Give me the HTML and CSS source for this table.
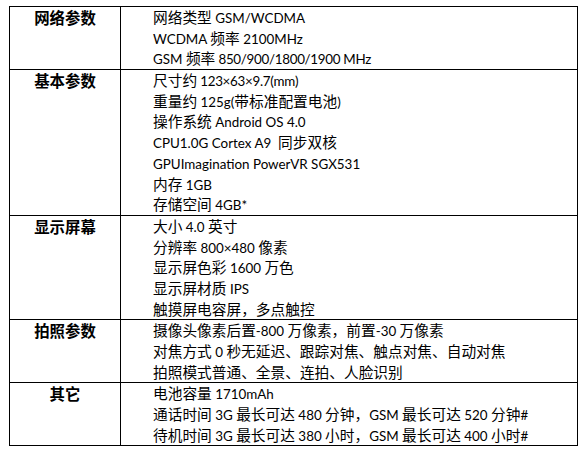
FILE: index.html
```html
<!DOCTYPE html>
<html lang="zh">
<head>
<meta charset="utf-8">
<link rel="stylesheet" href="styles.css">
</head>
<body>
<table class="spec">
  <tr>
    <th>网络参数</th>
    <td>
      <div>网络类型<span class="l"> GSM/WCDMA</span></div>
      <div><span class="l">WCDMA </span>频率<span class="l"> 2100MHz</span></div>
      <div><span class="l">GSM </span>频率<span class="l n"> 850/900/1800/1900 MHz</span></div>
    </td>
  </tr>
  <tr>
    <th>基本参数</th>
    <td>
      <div>尺寸约<span class="l n"> 123×63×9.7(mm)</span></div>
      <div>重量约<span class="l"> 125g(</span>带标准配置电池<span class="l">)</span></div>
      <div>操作系统<span class="l"> Android OS 4.0</span></div>
      <div><span class="l">CPU1.0G Cortex A9 &nbsp;</span>同步双核</div>
      <div><span class="l">GPUImagination PowerVR SGX531</span></div>
      <div>内存<span class="l"> 1GB</span></div>
      <div>存储空间<span class="l"> 4GB*</span></div>
    </td>
  </tr>
  <tr>
    <th>显示屏幕</th>
    <td>
      <div>大小<span class="l"> 4.0 </span>英寸</div>
      <div>分辨率<span class="l"> 800×480 </span>像素</div>
      <div>显示屏色彩<span class="l"> 1600 </span>万色</div>
      <div>显示屏材质<span class="l"> IPS</span></div>
      <div>触摸屏电容屏，多点触控</div>
    </td>
  </tr>
  <tr>
    <th>拍照参数</th>
    <td>
      <div>摄像头像素后置<span class="l">-800 </span>万像素，前置<span class="l">-30 </span>万像素</div>
      <div>对焦方式<span class="l"> 0 </span>秒无延迟、跟踪对焦、触点对焦、自动对焦</div>
      <div>拍照模式普通、全景、连拍、人脸识别</div>
    </td>
  </tr>
  <tr>
    <th>其它</th>
    <td>
      <div>电池容量<span class="l"> 1710mAh</span></div>
      <div>通话时间<span class="l"> 3G </span>最长可达<span class="l"> 480 </span>分钟，<span class="l">GSM </span>最长可达<span class="l"> 520 </span>分钟<span class="l">#</span></div>
      <div>待机时间<span class="l"> 3G </span>最长可达<span class="l"> 380 </span>小时，<span class="l">GSM </span>最长可达<span class="l"> 400 </span>小时<span class="l">#</span></div>
    </td>
  </tr>
</table>
</body>
</html>
```
FILE: styles.css
```css
html, body {
  margin: 0;
  padding: 0;
  background: #fff;
}
body {
  padding: 6px 0 0 9px;
  font-family: "Lato", "Noto Sans CJK SC", sans-serif;
  font-size: 14.7px;
  color: #000;
}
.spec {
  border-collapse: collapse;
  width: 569px;
}
.spec th, .spec td {
  border: 1px solid #000;
  padding: 0;
  line-height: 20.7px;
  vertical-align: top;
}
.spec td div {
  height: 20.7px;
}
.spec th {
  width: 110px;
  font-family: "Noto Sans CJK SC", sans-serif;
  font-size: 15.4px;
  font-weight: bold;
  text-align: center;
}
.spec td {
  padding-left: 32px;
  text-align: left;
}
.l {
  font-size: 13.4px;
  line-height: 1;
}
.n {
  letter-spacing: -0.3px;
}
```
